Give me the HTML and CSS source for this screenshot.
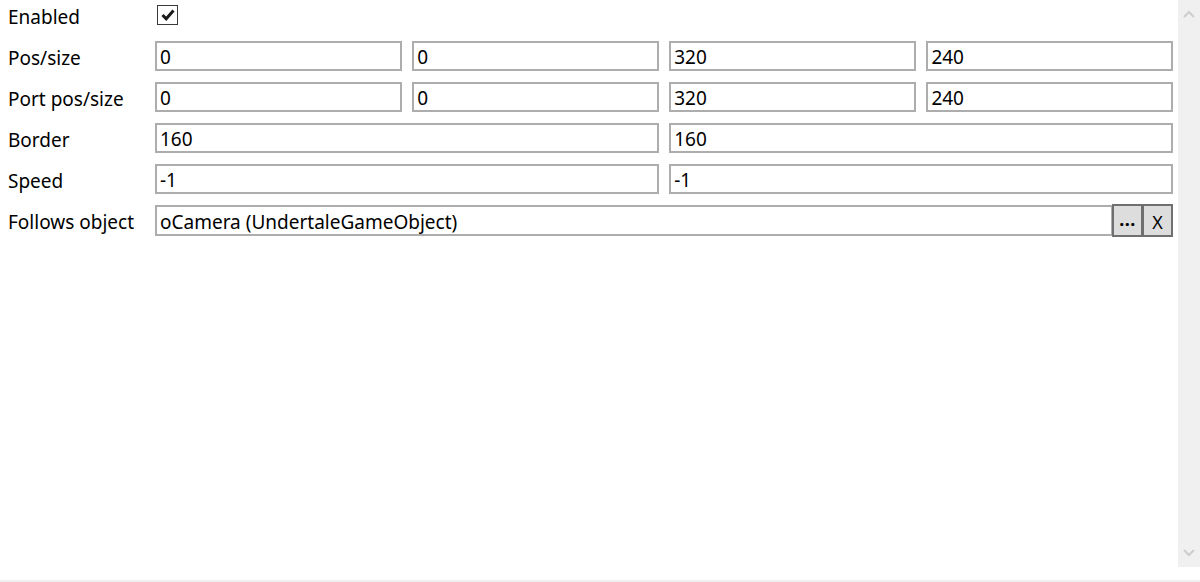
FILE: index.html
```html
<!DOCTYPE html>
<html>
<head>
<meta charset="utf-8">
<link rel="stylesheet" href="styles.css">
</head>
<body>
<div class="window">
  <div class="content">
    <div class="grid">
      <div class="label">Enabled</div>
      <div class="check-cell">
        <span class="checkbox">
          <svg width="14" height="12" viewBox="0 0 14 12"><path d="M1.5 6 L5.2 9.8 L12.5 1.5" fill="none" stroke="#1a1a1a" stroke-width="3"/></svg>
        </span>
      </div>

      <div class="label">Pos/size</div>
      <div class="field">0</div>
      <div class="field">0</div>
      <div class="field">320</div>
      <div class="field">240</div>

      <div class="label">Port pos/size</div>
      <div class="field">0</div>
      <div class="field">0</div>
      <div class="field">320</div>
      <div class="field">240</div>

      <div class="label">Border</div>
      <div class="field span2">160</div>
      <div class="field span2">160</div>

      <div class="label">Speed</div>
      <div class="field span2">-1</div>
      <div class="field span2">-1</div>

      <div class="label">Follows object</div>
      <div class="follow">
        <div class="field grow">oCamera (UndertaleGameObject)</div>
        <div class="btn dots">...</div>
        <div class="btn x">X</div>
      </div>
    </div>
  </div>
  <div class="scrollbar">
    <svg class="arrow" width="12" height="8" viewBox="0 0 12 8"><path d="M1 7 L6 2 L11 7" fill="none" stroke="#cdcdcd" stroke-width="2"/></svg>
    <svg class="arrow" width="12" height="8" viewBox="0 0 12 8"><path d="M1 1 L6 6 L11 1" fill="none" stroke="#cdcdcd" stroke-width="2"/></svg>
  </div>
</div>
<div class="bottom"></div>
</body>
</html>
```

FILE: styles.css
```css
html, body {
  margin: 0;
  padding: 0;
  background: #ffffff;
}
body {
  font-family: "Noto Sans", "Open Sans", sans-serif;
  font-size: 19px;
  color: #000;
  width: 1200px;
  height: 582px;
  overflow: hidden;
}
.window {
  display: flex;
  height: 567px;
}
.content {
  flex: 1;
  padding: 0 5px 0 8px;
}
.grid {
  display: grid;
  grid-template-columns: 136.5px repeat(4, 1fr);
  grid-auto-rows: 30px;
  column-gap: 10.5px;
  row-gap: 11px;
}
.label {
  display: flex;
  align-items: center;
  white-space: nowrap;
  padding-top: 3px;
}
.check-cell {
  grid-column: span 4;
  display: flex;
  align-items: center;
  padding-left: 2px;
}
.checkbox {
  width: 19px;
  height: 18px;
  border: 1.5px solid #3a3a3a;
  display: flex;
  align-items: center;
  justify-content: center;
  box-sizing: content-box;
}
.field {
  border: 2px solid #adadad;
  box-sizing: border-box;
  height: 30px;
  display: flex;
  align-items: center;
  padding-left: 3px;
  padding-top: 2px;
  white-space: nowrap;
}
.span2 {
  grid-column: span 2;
}
.follow {
  grid-column: span 4;
  display: flex;
  align-items: center;
  margin-top: 1px;
}
.grow {
  flex: 1;
  height: 31px;
}
.btn {
  width: 31px;
  height: 33px;
  box-sizing: border-box;
  border: 2px solid #6f6f6f;
  background: #dddddd;
  display: flex;
  align-items: center;
  justify-content: center;
  margin-left: -1px;
}
.dots {
  font-size: 18px;
  font-weight: bold;
  align-items: flex-end;
  padding-bottom: 4px;
  letter-spacing: 0.5px;
}
.x {
  font-size: 18px;
  padding-top: 2px;
}
.scrollbar {
  width: 22px;
  background: #f0f0f0;
  display: flex;
  flex-direction: column;
  justify-content: space-between;
  align-items: center;
  padding: 10px 0 10px;
  box-sizing: border-box;
}
.bottom {
  height: 15px;
  border-bottom: 2px solid #f0f0f0;
  box-sizing: border-box;
}
```
